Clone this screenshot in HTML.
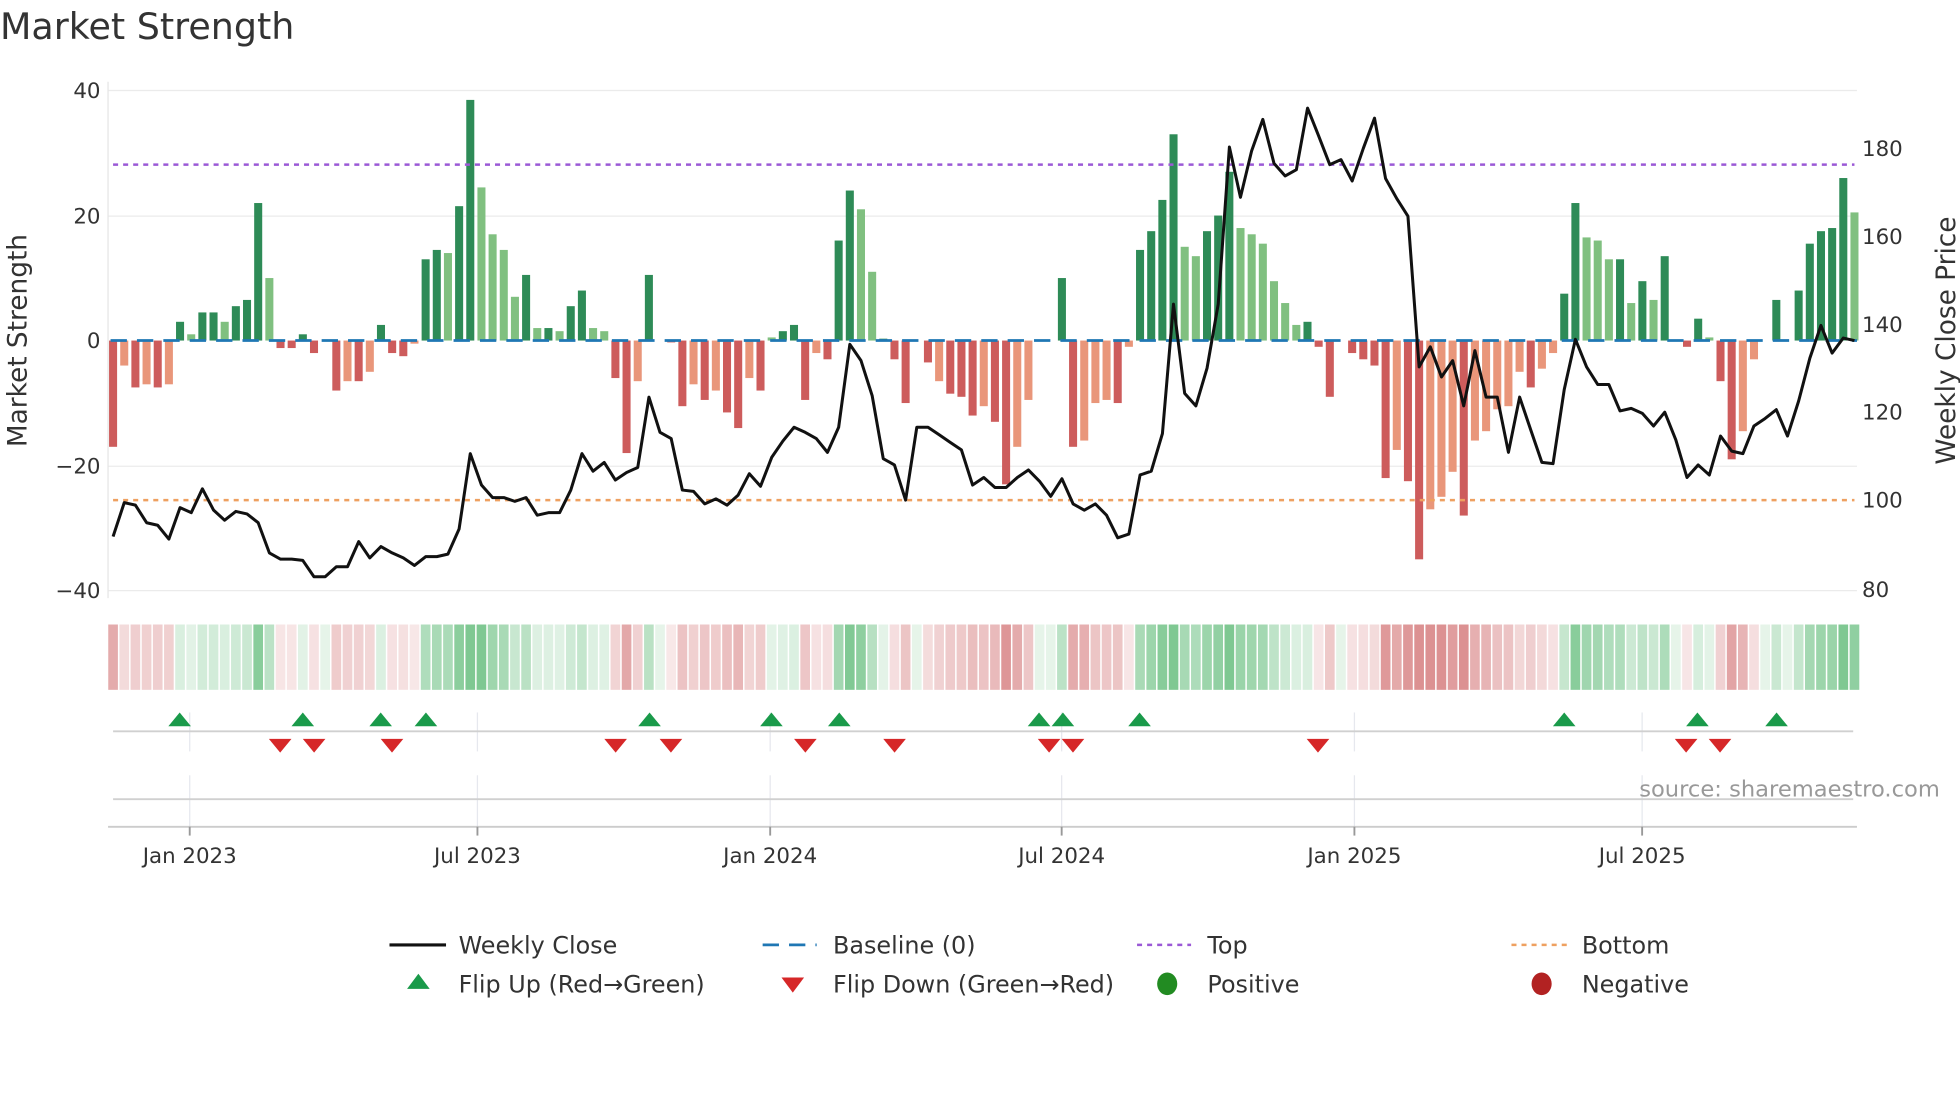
<!DOCTYPE html>
<html><head><meta charset="utf-8"><style>
html,body{margin:0;padding:0;background:#fff;width:1960px;height:1102px;overflow:hidden}
svg{display:block}
text{font-family:"DejaVu Sans","Liberation Sans",sans-serif;fill:#333}
</style></head><body>
<svg id="s" width="1960" height="1102" viewBox="0 0 1560 877" xmlns="http://www.w3.org/2000/svg">
<rect width="1560" height="877" fill="#fff"/>
<text x="0" y="31" font-size="29">Market Strength</text>
<g stroke="#ebebeb" stroke-width="1">
<line x1="86" x2="1478" y1="72" y2="72"/><line x1="86" x2="1478" y1="172" y2="172"/>
<line x1="86" x2="1478" y1="371" y2="371"/><line x1="86" x2="1478" y1="470" y2="470"/>
</g>
<line x1="86" x2="86" y1="65" y2="476" stroke="#e6e6e6"/>
<g font-size="17" text-anchor="end">
<text x="80" y="78">40</text><text x="80" y="178">20</text><text x="80" y="277">0</text>
<text x="80" y="377">−20</text><text x="80" y="476">−40</text>
</g>
<g font-size="17">
<text x="1482" y="124">180</text><text x="1482" y="194">160</text><text x="1482" y="264">140</text>
<text x="1482" y="334">120</text><text x="1482" y="404">100</text><text x="1482" y="475">80</text>
</g>
<text transform="translate(21,271) rotate(-90)" font-size="21" text-anchor="middle">Market Strength</text>
<text transform="translate(1556,271) rotate(-90)" font-size="21" text-anchor="middle">Weekly Close Price</text>
<g id="bars"></g>
<line x1="88" x2="1478" y1="271" y2="271" stroke="#1f77b4" stroke-width="2.2" stroke-dasharray="13,8"/>
<line x1="90" x2="1476" y1="131" y2="131" stroke="#9b59d6" stroke-width="2" stroke-dasharray="4,4"/>
<line x1="90" x2="1476" y1="398" y2="398" stroke="#eea060" stroke-width="2" stroke-dasharray="4,4"/>
<polyline id="price" fill="none" stroke="#111" stroke-width="2.4" stroke-linejoin="round"/>
<g id="heat"></g>
<g stroke="#e6e8ee" stroke-width="1">
<line x1="151" x2="151" y1="567" y2="598"/><line x1="380" x2="380" y1="567" y2="598"/><line x1="613" x2="613" y1="567" y2="598"/><line x1="845" x2="845" y1="567" y2="598"/><line x1="1078" x2="1078" y1="567" y2="598"/><line x1="1307" x2="1307" y1="567" y2="598"/>
<line x1="151" x2="151" y1="617" y2="658"/><line x1="380" x2="380" y1="617" y2="658"/><line x1="613" x2="613" y1="617" y2="658"/><line x1="845" x2="845" y1="617" y2="658"/><line x1="1078" x2="1078" y1="617" y2="658"/><line x1="1307" x2="1307" y1="617" y2="658"/>
</g>
<line x1="90" x2="1475" y1="582" y2="582" stroke="#d0d0d0" stroke-width="1.5"/>
<line x1="90" x2="1475" y1="636" y2="636" stroke="#d0d0d0" stroke-width="1.5"/>
<line x1="86" x2="1478" y1="658" y2="658" stroke="#ccc" stroke-width="1.5"/>
<g stroke="#999" stroke-width="1.5">
<line x1="151" x2="151" y1="658" y2="665"/><line x1="380" x2="380" y1="658" y2="665"/><line x1="613" x2="613" y1="658" y2="665"/><line x1="845" x2="845" y1="658" y2="665"/><line x1="1078" x2="1078" y1="658" y2="665"/><line x1="1307" x2="1307" y1="658" y2="665"/>
</g>
<g id="tri"></g>
<text x="1544" y="634" font-size="18" text-anchor="end" style="fill:#999">source: sharemaestro.com</text>
<g font-size="17" text-anchor="middle">
<text x="151" y="687">Jan 2023</text><text x="380" y="687">Jul 2023</text><text x="613" y="687">Jan 2024</text>
<text x="845" y="687">Jul 2024</text><text x="1078" y="687">Jan 2025</text><text x="1307" y="687">Jul 2025</text>
</g>
<g font-size="19">
<line x1="310" x2="355" y1="752" y2="752" stroke="#111" stroke-width="2.5"/>
<text x="365" y="759">Weekly Close</text>
<line x1="607" x2="650" y1="752" y2="752" stroke="#1f77b4" stroke-width="2.2" stroke-dasharray="13,8"/>
<text x="663" y="759">Baseline (0)</text>
<line x1="905" x2="948" y1="752" y2="752" stroke="#9b59d6" stroke-width="2" stroke-dasharray="4,4"/>
<text x="961" y="759">Top</text>
<line x1="1203" x2="1247" y1="752" y2="752" stroke="#eea060" stroke-width="2" stroke-dasharray="4,4"/>
<text x="1259" y="759">Bottom</text>
<path d="M324,787 L342,787 L333,775 Z" fill="#1a9a4a"/>
<text x="365" y="790">Flip Up (Red→Green)</text>
<path d="M622,778 L640,778 L631,790 Z" fill="#d62728"/>
<text x="663" y="790">Flip Down (Green→Red)</text>
<ellipse cx="929" cy="783" rx="8" ry="9" fill="#228b22"/>
<text x="961" y="790">Positive</text>
<ellipse cx="1227" cy="783" rx="8" ry="9" fill="#b22222"/>
<text x="1259" y="790">Negative</text>
</g>
</svg>
<script>
var V=[-17,-4,-7.5,-7,-7.5,-7,3,1,4.5,4.5,3,5.5,6.5,22,10,-1.2,-1.2,1,-2,0,-8,-6.5,-6.5,-5,2.5,-2,-2.5,-0.5,13,14.5,14,21.5,38.5,24.5,17,14.5,7,10.5,2,2,1.5,5.5,8,2,1.5,-6,-18,-6.5,10.5,0,-0.3,-10.5,-7,-9.5,-8,-11.5,-14,-6,-8,0.5,1.5,2.5,-9.5,-2,-3,16,24,21,11,0.3,-3,-10,0,-3.5,-6.5,-8.5,-9,-12,-10.5,-13,-23,-17,-9.5,0,0,10,-17,-16,-10,-9.5,-10,-1,14.5,17.5,22.5,33,15,13.5,17.5,20,27,18,17,15.5,9.5,6,2.5,3,-1,-9,0,-2,-3,-4,-22,-17.5,-22.5,-35,-27,-25,-21,-28,-16,-14.5,-11,-10.5,-5,-7.5,-4.5,-2,7.5,22,16.5,16,13,13,6,9.5,6.5,13.5,0,-1,3.5,0.5,-6.5,-19,-14.5,-3,0,6.5,0,8,15.5,17.5,18,26,20.5];
var L=[0,1,0,1,0,1,0,1,0,0,1,0,0,0,1,0,0,0,0,0,0,1,0,1,0,0,0,1,0,0,1,0,0,1,1,1,1,0,1,0,1,0,0,1,1,0,0,1,0,0,0,0,1,0,1,0,0,1,0,1,0,0,0,1,0,0,0,1,1,0,0,0,0,0,1,0,0,0,1,0,0,1,1,0,0,0,0,1,1,1,0,1,0,0,0,0,1,1,0,0,0,1,1,1,1,1,1,0,0,0,0,0,0,0,0,1,0,0,1,1,1,0,1,1,1,1,1,0,1,1,0,0,1,1,1,0,1,0,1,0,0,0,0,1,0,0,1,1,0,0,0,0,0,0,0,0,1];
var P=[427,400,402,416,418,429,404,408,389,406,414,407,409,416,440,445,445,446,459,459,451,451,431,444,435,440,444,450,443,443,441,421,361,386,396,396,399,396,410,408,408,390,361,375,368,382,376,372,316,344,349,390,391,401,397,402,394,377,387,364,351,340,344,349,360,340,274,287,315,365,370,398,340,340,346,352,358,386,380,388,388,380,374,383,395,381,401,406,401,410,428,425,378,375,345,242,313,323,293,242,117,157,120,95,130,140,135,86,108,131,127,144,118,94,142,158,172,292,276,300,287,323,279,316,316,360,316,342,368,369,310,270,292,306,306,327,325,329,339,328,350,380,370,378,347,359,361,339,333,326,347,319,285,259,281,269,271];
var n=V.length,x0=90,x1=1476,st=(x1-x0)/(n-1),ns="http://www.w3.org/2000/svg";
function el(t,a,p){var e=document.createElementNS(ns,t);for(var k in a)e.setAttribute(k,a[k]);p.appendChild(e);return e;}
var gb=document.getElementById('bars'),gh=document.getElementById('heat'),gt=document.getElementById('tri');
for(var i=0;i<n;i++){var x=x0+i*st,v=V[i],h=Math.abs(v)*4.975,lt=L[i]||0;
 var c=v>=0?(lt?'#80c080':'#2e8b57'):(lt?'#e9967a':'#cd5c5c');
 if(h>0.3)el('rect',{x:x-3.2,y:v>=0?271-h:271,width:6.4,height:h,fill:c},gb);
 var a=Math.min(0.9,0.18+Math.abs(v)/34);
 el('rect',{x:x-st/2+0.6,y:497,width:st-1.2,height:52,fill:v>=0?'#34a853':'#c0393b','fill-opacity':(v>=0?a*0.7:a*0.62)},gh);
}
var pts=[];for(var i=0;i<P.length;i++)pts.push((x0+i*st).toFixed(1)+','+P[i]);
document.getElementById('price').setAttribute('points',pts.join(' '));
[143,241,303,339,517,614,668,827,846,907,1245,1351,1414].forEach(function(x){el('path',{d:'M'+(x-9)+',578 L'+(x+9)+',578 L'+x+',567 Z',fill:'#1a9a4a'},gt);});
[223,250,312,490,534,641,712,835,854,1049,1342,1369].forEach(function(x){el('path',{d:'M'+(x-9)+',588 L'+(x+9)+',588 L'+x+',599 Z',fill:'#d62728'},gt);});
</script>
</body></html>
